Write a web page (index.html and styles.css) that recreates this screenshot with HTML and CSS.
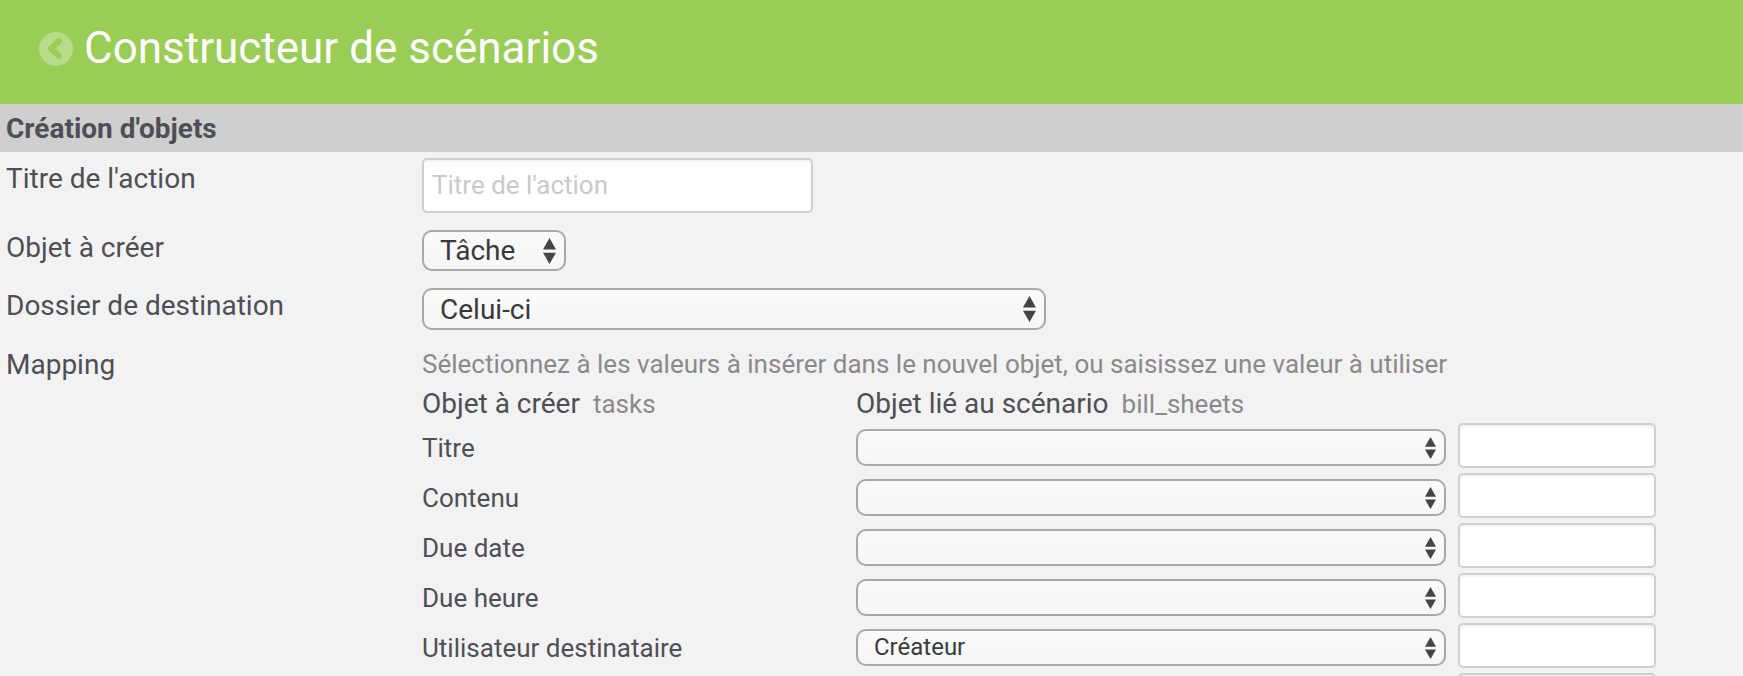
FILE: index.html
```html
<!DOCTYPE html>
<html lang="fr">
<head>
<meta charset="utf-8">
<title>Constructeur de scénarios</title>
<link rel="stylesheet" href="styles.css">
</head>
<body>
<svg class="defs" width="0" height="0" aria-hidden="true"><defs><symbol id="arrows" viewBox="0 0 12 24"><path d="M6 0 L12 10.500 H0 Z M0 13.500 H12 L6 24 Z"/></symbol></defs></svg>
<header class="top">
  <svg class="back" viewBox="0 0 34 34" aria-hidden="true"><circle cx="17" cy="17" r="17"/><path d="M20 9 L12 16.500 L20 24" /></svg>
  <h1>Constructeur de scénarios</h1>
</header>
<h2 class="section">Création d'objets</h2>
<main class="form">
  <div class="row row-title">
    <label>Titre de l'action</label>
    <div class="text-input wide placeholder">Titre de l'action</div>
  </div>
  <div class="row row-object">
    <label>Objet à créer</label>
    <div class="select small"><span>Tâche</span><svg class="arrows"><use href="#arrows"/></svg></div>
  </div>
  <div class="row row-folder">
    <label>Dossier de destination</label>
    <div class="select medium"><span>Celui-ci</span><svg class="arrows"><use href="#arrows"/></svg></div>
  </div>
  <div class="row row-mapping">
    <label>Mapping</label>
    <div class="mapping">
      <p class="hint">Sélectionnez à les valeurs à insérer dans le nouvel objet, ou saisissez une valeur à utiliser</p>
      <div class="map-head">
        <div><b>Objet à créer</b><i>tasks</i></div>
        <div><b>Objet lié au scénario</b><i>bill_sheets</i></div>
      </div>
      <div class="map-row"><span class="name">Titre</span><div class="select map"><span></span><svg class="arrows"><use href="#arrows"/></svg></div><div class="text-input cell"></div></div>
      <div class="map-row"><span class="name">Contenu</span><div class="select map"><span></span><svg class="arrows"><use href="#arrows"/></svg></div><div class="text-input cell"></div></div>
      <div class="map-row"><span class="name">Due date</span><div class="select map"><span></span><svg class="arrows"><use href="#arrows"/></svg></div><div class="text-input cell"></div></div>
      <div class="map-row"><span class="name">Due heure</span><div class="select map"><span></span><svg class="arrows"><use href="#arrows"/></svg></div><div class="text-input cell"></div></div>
      <div class="map-row"><span class="name">Utilisateur destinataire</span><div class="select map"><span class="value">Créateur</span><svg class="arrows"><use href="#arrows"/></svg></div><div class="text-input cell"></div></div>
      <div class="map-row"><span class="name"></span><div class="select map"><span></span><svg class="arrows"><use href="#arrows"/></svg></div><div class="text-input cell"></div></div>
    </div>
  </div>
</main>
</body>
</html>
```

FILE: styles.css
```css
* { box-sizing: border-box; }
html, body { margin: 0; height: 676px; overflow: hidden; }
body { background: #f2f2f2; font-family: Roboto, sans-serif; color: #4e4f55; }
.defs { display: block; height: 0; }
.top { height: 104px; background: #99cd55; display: flex; align-items: flex-start; padding: 32px 0 0 39px; gap: 11px; }
.back { width: 34px; height: 34px; flex: none; }
.back circle { fill: #b8dd8a; }
.back path { fill: none; stroke: #99cd55; stroke-width: 6; stroke-linecap: round; stroke-linejoin: round; }
.top h1 { margin: -8px 0 0; font-size: 44px; line-height: 48px; font-weight: 400; color: #fff; }
.section { margin: 0; height: 48px; background: #cfcfcf; padding: 1px 0 0 6px; font-size: 28px; line-height: 48px; font-weight: 700; color: #4e4f55; }
.form { height: 524px; overflow: hidden; padding-left: 6px; }
.row { display: flex; align-items: flex-start; }
.row label { width: 416px; flex: none; font-size: 28px; line-height: 30px; }
.row-title { padding-top: 6px; height: 70px; }
.row-title label { margin-top: 6px; }
.row-object { height: 58px; padding-top: 8px; }
.row-object label { margin-top: 3px; }
.row-folder { height: 70px; padding-top: 8px; }
.row-folder label { margin-top: 3px; }
.text-input { background: #fff; border: 2px solid #cfcfcf; border-radius: 5px; box-shadow: inset 0 2px 2px rgba(0,0,0,.05); }
.wide { width: 391px; height: 55px; padding-left: 8px; font-size: 26px; line-height: 51px; }
.placeholder { color: #c9c9c9; }
.select { display: flex; align-items: center; justify-content: space-between; background: linear-gradient(#fafafa, #f6f6f6); border: 2px solid #a8a8a8; border-radius: 10px; color: #3a3a3a; }
.select .arrows { width: 13px; height: 26px; fill: #444; flex: none; }
.small { width: 144px; height: 41px; padding: 0 8px 0 16px; font-size: 28px; }
.medium { width: 624px; height: 42px; padding: 0 8px 0 16px; font-size: 28px; }
.map { width: 590px; height: 37px; margin-top: 5px; padding: 0 8px 0 16px; font-size: 24px; }
.map .arrows { width: 11px; height: 22px; }
.value { margin-top: -2px; }
.hint { margin: 0; height: 33px; font-size: 26px; line-height: 28px; color: #8a8a8a; white-space: nowrap; }
.map-head { display: flex; height: 37px; padding-top: 4px; align-items: center; font-size: 28px; }
.map-head > div { display: flex; align-items: baseline; gap: 13px; }
.map-head > div:first-child { width: 434px; }
.map-head b { font-weight: 400; }
.map-head i { font-style: normal; font-size: 26px; color: #8a8a8a; }
.map-row { display: flex; align-items: center; height: 50px; }
.name { width: 434px; flex: none; font-size: 26px; padding-top: 6px; }
.cell { width: 198px; height: 45px; margin-left: 12px; flex: none; }
```
